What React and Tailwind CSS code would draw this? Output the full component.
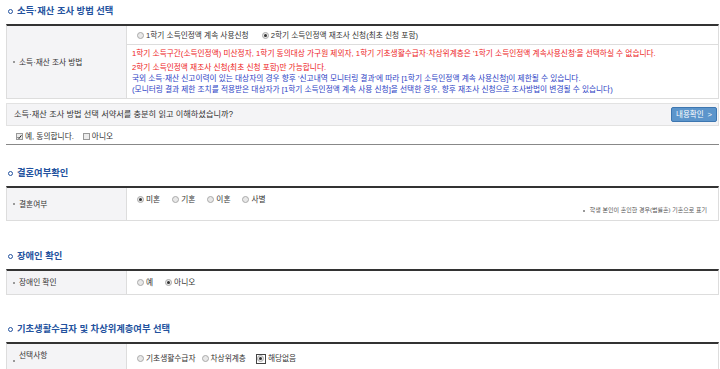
const Title = ({ children }) => (
  <div className="h-[24px] flex items-center pb-[2px] pl-[2px]">
    <span className="w-[5px] h-[5px] rounded-full border-[1.5px] border-[#23529e]" />
    <h2 className="ml-[4px] text-[9.3px] leading-[12px] font-bold text-[#23529e]">{children}</h2>
  </div>
);

const Label = ({ children, className = 'items-center' }) => (
  <div className={`w-[120px] shrink-0 bg-[#f4f4f6] border-r border-[#dddddd] flex pl-[6px] ${className}`}>
    <span className="w-[2px] h-[2px] bg-[#9a9a9a] self-center" />
    <span className="ml-[4px] leading-[11px]">{children}</span>
  </div>
);

const Dot = ({ checked }) => (
  <span className="flex items-center justify-center w-[7px] h-[7px] rounded-full border border-[#aaaaaa] bg-[#e8e8e8]">
    {checked && <span className="w-[3px] h-[3px] rounded-full bg-[#333333]" />}
  </span>
);

const Radio = ({ checked, focus, children, className = '' }) => (
  <label className={`inline-flex items-center ${className}`}>
    {focus ? (
      <span className="flex items-center justify-center w-[10px] h-[10px] border border-[#444444]">
        <Dot checked={checked} />
      </span>
    ) : (
      <Dot checked={checked} />
    )}
    <span className="ml-[2px]">{children}</span>
  </label>
);

const Check = ({ checked, children, className = '' }) => (
  <label className={`inline-flex items-center ${className}`}>
    <span className="flex items-center justify-center w-[7px] h-[7px] border border-[#999999] bg-[#ececec]">
      {checked && (
        <svg width="6" height="6" viewBox="0 0 6 6">
          <path d="M0.8 3.2 L2.4 4.8 L5.3 1" stroke="#222" strokeWidth="1.2" fill="none" />
        </svg>
      )}
    </span>
    <span className="ml-[2px]">{children}</span>
  </label>
);

export default function App() {
  return (
    <div className="bg-white min-h-[369px] pl-[6px] font-['Liberation_Sans','Noto_Sans_CJK_KR',sans-serif] text-[7.7px] leading-[11px] text-[#333333]">
      <div className="w-[713px]">
        {/* 소득·재산 조사 방법 */}
        <Title>소득·재산 조사 방법 선택</Title>
        <div className="flex border-x border-b border-[#dddddd] border-t-2 border-t-[#333333]">
          <Label>소득·재산 조사 방법</Label>
          <div className="flex-1">
            <div className="h-[19px] border-b border-[#dddddd] flex items-center pl-[10px]">
              <Radio>1학기 소득인정액 계속 사용신청</Radio>
              <Radio checked className="ml-[13px]">2학기 소득인정액 재조사 신청(최초 신청 포함)</Radio>
            </div>
            <div className="pl-[5px] pt-[3px] pb-[3px]">
              <p className="text-[#ed2324] mb-[3px]">
                1학기 소득구간(소득인정액) 미산정자, 1학기 동의대상 가구원 제외자, 1학기 기초생활수급자·차상위계층은 '1학기 소득인정액 계속사용신청'을 선택하실 수 없습니다.
              </p>
              <p className="text-[#ed2324]">2학기 소득인정액 재조사 신청(최초 신청 포함)만 가능합니다.</p>
              <p className="text-[#2b41c4]">
                국외 소득·재산 신고이력이 있는 대상자의 경우 향후 '신고내역 모니터링 결과'에 따라 [1학기 소득인정액 계속 사용신청]이 제한될 수 있습니다.
              </p>
              <p className="text-[#2b41c4]">
                (모니터링 결과 제한 조치를 적용받은 대상자가 [1학기 소득인정액 계속 사용 신청]을 선택한 경우, 향후 재조사 신청으로 조사방법이 변경될 수 있습니다)
              </p>
            </div>
          </div>
        </div>

        <div className="mt-[4px] h-[23px] border border-[#e2e2e2] bg-[#f4f4f6] flex items-center justify-between pl-[7px] pr-[1px]">
          <span className="text-[8.2px]">소득·재산 조사 방법 선택 서약서를 충분히 읽고 이해하셨습니까?</span>
          <button className="h-[15px] w-[46px] rounded-[2px] border border-[#3d76b0] bg-[#5c95cb] text-white text-[7.5px] leading-[13px] flex items-center justify-center">
            내용확인<span className="ml-[4px]">&gt;</span>
          </button>
        </div>

        <div className="h-[19px] flex items-end pb-[2px] pl-[10px] border-b border-[#888888] text-[7.7px]">
          <Check checked>예, 동의합니다.</Check>
          <Check className="ml-[9px]">아니오</Check>
        </div>

        {/* 결혼여부 */}
        <div className="mt-[17px]">
          <Title>결혼여부확인</Title>
          <div className="flex border-x border-b border-[#dddddd] border-t-2 border-t-[#333333]">
            <Label>결혼여부</Label>
            <div className="flex-1 pl-[10px] pt-[6px] pb-[4px]">
              <div className="flex items-center">
                <Radio checked>미혼</Radio>
                <Radio className="ml-[12px]">기혼</Radio>
                <Radio className="ml-[12px]">이혼</Radio>
                <Radio className="ml-[12px]">사별</Radio>
              </div>
              <div className="flex items-center justify-end pr-[11px] text-[6px]">
                <span className="w-[2px] h-[2px] bg-[#9a9a9a] mr-[5px]" />
                <span className="text-[#555555]">학생 본인이 혼인한 경우(법률혼) 기혼으로 표기</span>
              </div>
            </div>
          </div>
        </div>

        {/* 장애인 확인 */}
        <div className="mt-[24px]">
          <Title>장애인 확인</Title>
          <div className="flex border-x border-b border-[#dddddd] border-t-2 border-t-[#333333]">
            <Label>장애인 확인</Label>
            <div className="flex-1 h-[23px] pl-[10px] flex items-center">
              <Radio>예</Radio>
              <Radio checked className="ml-[12px]">아니오</Radio>
            </div>
          </div>
        </div>

        {/* 기초생활수급자 */}
        <div className="mt-[23px]">
          <Title>기초생활수급자 및 차상위계층여부 선택</Title>
          <div className="flex border-x border-b border-[#dddddd] border-t-2 border-t-[#333333]">
            <Label className="items-start pt-[6px]">선택사항</Label>
            <div className="flex-1 h-[28px] pl-[10px] pt-[9px] flex items-start">
              <Radio>기초생활수급자</Radio>
              <Radio className="ml-[6px]">차상위계층</Radio>
              <Radio checked focus className="ml-[10px]">해당없음</Radio>
            </div>
          </div>
        </div>
      </div>
    </div>
  );
}
